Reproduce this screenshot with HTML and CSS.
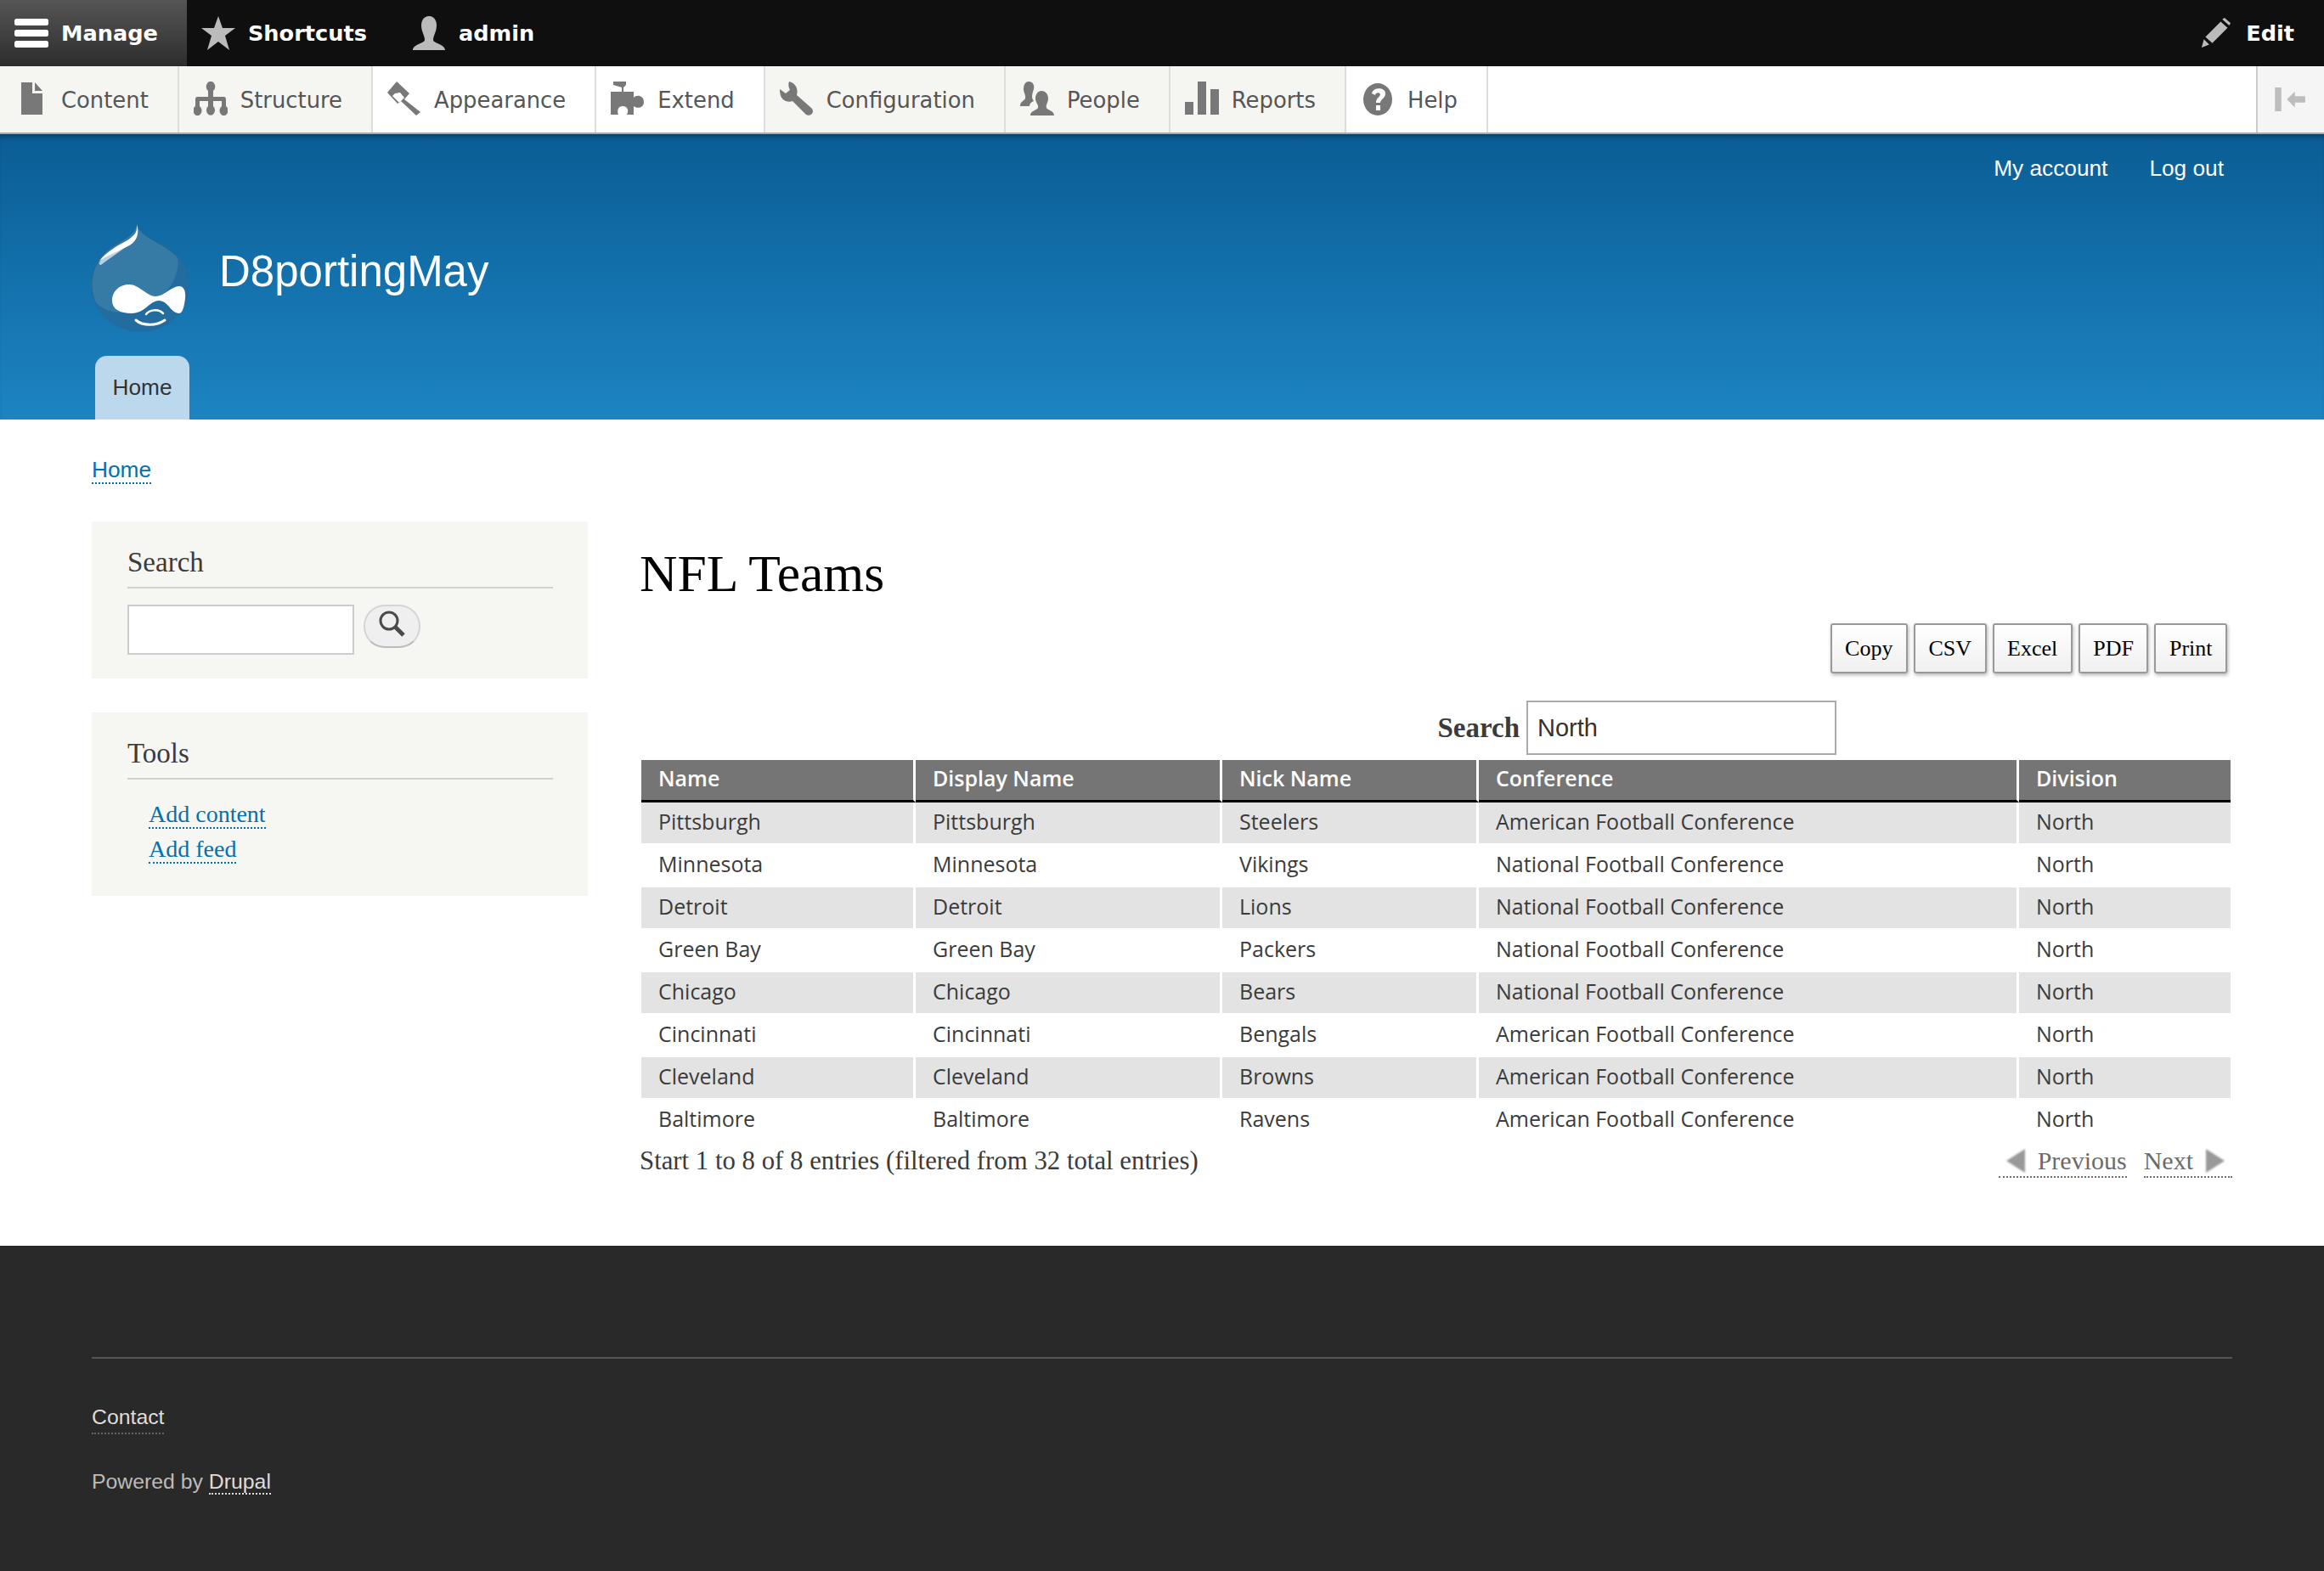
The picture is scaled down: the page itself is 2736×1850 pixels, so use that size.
FILE: index.html
```html
<!DOCTYPE html>
<html lang="en">
<head>
  <meta charset="UTF-8" />
  <title>NFL Teams | D8portingMay</title>
  <link rel="stylesheet" href="styles.css">
</head>
<body>
  <!-- Admin toolbar -->
  <div class="tray">
    <a class="tray-item active">
      <svg class="icon" viewBox="0 0 40 40"><g fill="#fff"><rect x="0" y="3" width="40" height="8" rx="2.5"/><rect x="0" y="16" width="40" height="8" rx="2.5"/><rect x="0" y="29" width="40" height="8" rx="2.5"/></g></svg>
      Manage
    </a>
    <a class="tray-item">
      <svg class="icon" viewBox="0 0 40 40"><path fill="#bbb" d="M20 0l5 14 15 0-12 9 5 17-13-10-13 10 5-17-12-9 15 0z"/></svg>
      Shortcuts
    </a>
    <a class="tray-item">
      <svg class="icon" viewBox="0 0 40 40"><path fill="#bbb" d="M20 0c6 0 9 5 9 11 0 7-4 12-4 17 0 4 14 5 14 12h-38c0-7 14-8 14-12 0-5-4-10-4-17 0-6 3-11 9-11z"/></svg>
      admin
    </a>
    <a class="tray-item edit">
      <svg class="icon" viewBox="0 0 40 40"><path fill="#bbb" d="M28 2l3-2 8 7-2 3zM26 5l9 8-20 20-9-8zM4 28l7 7-10 4z"/></svg>
      Edit
    </a>
  </div>

  <div class="nav">
    <a class="nav-item trail">
      <svg class="icon" viewBox="0 0 40 40"><path fill="#787878" d="M8 1h13v13h12v25h-25zM24 1l9 10h-9z"/></svg>
      Content
    </a>
    <a class="nav-item trail">
      <svg class="icon" viewBox="0 0 40 40"><path fill="#787878" d="M20 0a5 6 0 0 1 3 11v7h12c3 0 3 2 3 4v7a5 6 0 1 1-5 0v-6h-10v6a5 6 0 1 1-6 0v-6h-10v6a5 6 0 1 1-5 0v-7c0-2 0-4 3-4h12v-7a5 6 0 0 1 3-11z"/></svg>
      Structure
    </a>
    <a class="nav-item">
      <svg class="icon" viewBox="0 0 40 40"><path fill="#787878" fill-rule="evenodd" d="M11 0l15 14-6 7 19 15-5 4-18-17-4 3-12-13zM9 14l-3 3 8 8 6-6-5-6z"/></svg>
      Appearance
    </a>
    <a class="nav-item">
      <svg class="icon" viewBox="0 0 40 40"><path fill="#787878" d="M3 0h15v4l-3 3v5h12v7c3-4 12-3 12 5s-9 8-12 5v10h-8c3-6 0-10-5-10s-7 5-5 10h-9v-27h13v-5l-10-3z"/></svg>
      Extend
    </a>
    <a class="nav-item trail">
      <svg class="icon" viewBox="0 0 40 40"><path fill="#787878" d="M11 0c-1 3-1 6 1 10l-5 4c-3-2-5-4-7-5 0 7 2 12 7 14 3 1 6 1 8 0l16 16c3 2 8 0 8-4 0-2-1-3-2-4l-17-15c2-7-1-14-9-16z"/></svg>
      Configuration
    </a>
    <a class="nav-item trail">
      <svg class="icon" viewBox="0 0 40 40"><path fill="#787878" d="M10 0c5 0 7 4 6 9-1 3-2 6-2 9 0 3 2 4 2 5-3 1-5 3-5 6h-11c0-6 5-6 6-9 1-4-2-7-2-11 0-5 2-9 6-9zM25 11c5 0 8 4 8 9 0 5-3 7-2 11 1 3 9 3 9 9h-28c0-6 8-6 9-9 1-4-3-6-3-11 0-5 3-9 7-9z"/></svg>
      People
    </a>
    <a class="nav-item trail">
      <svg class="icon" viewBox="0 0 40 40"><path fill="#787878" d="M0 24h10v15h-10zM15 0h10v39h-10zM30 9h10v30h-10z"/></svg>
      Reports
    </a>
    <a class="nav-item">
      <svg class="icon" viewBox="0 0 40 40"><path fill="#787878" fill-rule="evenodd" d="M20 2a17 19 0 1 1 0 38a17 19 0 1 1 0-38zM13 14l4 2c0-3 5-4 6-1 0 3-5 4-5 10h5c0-4 6-5 6-11 0-7-14-8-16 0zM18 28v6h5v-6z"/></svg>
      Help
    </a>
    <div class="nav-toggle">
      <svg class="toggle-icon" viewBox="0 0 40 32"><path fill="#bdbdbd" d="M0 1h8v30h-8zM15 16l10-10v6h13v8h-13v6z"/></svg>
    </div>
  </div>

  <!-- Site header -->
  <header class="header">
    <div class="secondary">
      <a>My account</a>
      <a>Log out</a>
    </div>
    <div class="branding">
      <svg class="logo" viewBox="0 0 114 128">
        <path fill="#357ba6" stroke="#2d5f80" stroke-width="0.8" d="M53 1C55 13 70 19 88 30C105 41 114 58 114 73C114 105 88 128 58 128C26 128 0 105 0 73C0 50 14 34 30 25C42 18 52 12 53 1Z"/>
        <path fill="#236c9f" d="M101 38C108 47 114 60 114 73C114 105 88 128 58 128C32 128 10 113 3 92C14 105 28 108 48 104C78 98 106 72 101 38Z"/>
        <path fill="#b9d0e0" d="M52 12C53 18 50 22 44 26C32 35 20 43 11 50C8 50 8 47 11 44C20 34 40 26 52 12Z"/>
        <path fill="#fff" d="M53 2C54 12 50 16 42 21C30 27 16 36 9 45C20 38 36 32 46 26C54 20 56 12 53 2Z"/>
        <path fill="#fff" d="M24 92C24 80 34 73 44 73C56 73 65 87 75 87C85 87 94 75 103 75C109 75 111 82 110 90C109 98 107 107 103 107C93 107 90 92 79 92C68 92 63 107 47 107C33 107 24 102 24 92Z"/>
        <path fill="none" stroke="#fff" stroke-width="3" stroke-linecap="round" d="M52 115C60 122 76 122 86 115"/>
        <path fill="none" stroke="#fff" stroke-width="2.5" stroke-linecap="round" d="M64 108C68 103 78 101 84 107"/>
      </svg>
      <div class="site-name">D8portingMay</div>
    </div>
    <div class="tabs">
      <a class="tab">Home</a>
    </div>
  </header>

  <div class="page">
    <div class="breadcrumb"><a class="link">Home</a></div>
    <div class="columns">
      <aside class="sidebar">
        <section class="block">
          <h2 class="block-title">Search</h2>
          <form class="search-form">
            <input class="search-input" type="text" />
            <button class="search-btn" type="button">
              <svg class="search-icon" viewBox="0 0 32 32"><circle cx="12" cy="12" r="10" fill="none" stroke="#4a4a4a" stroke-width="3"/><path d="M19 19l10 10" stroke="#4a4a4a" stroke-width="5"/></svg>
            </button>
          </form>
        </section>
        <section class="block">
          <h2 class="block-title">Tools</h2>
          <ul class="tool-list">
            <li><a class="link">Add content</a></li>
            <li><a class="link">Add feed</a></li>
          </ul>
        </section>
      </aside>

      <main class="main">
        <h1 class="page-title">NFL Teams</h1>
        <div class="export">
          <button class="export-btn">Copy</button>
          <button class="export-btn">CSV</button>
          <button class="export-btn">Excel</button>
          <button class="export-btn">PDF</button>
          <button class="export-btn">Print</button>
        </div>
        <div class="table-filter">
          <label class="filter-label">Search</label>
          <input class="filter-input" type="text" value="North" />
        </div>
        <table class="teams">
          <thead>
            <tr><th class="col-name">Name</th><th class="col-display">Display Name</th><th class="col-nick">Nick Name</th><th class="col-conf">Conference</th><th class="col-div">Division</th></tr>
          </thead>
          <tbody>
            <tr><td>Pittsburgh</td><td>Pittsburgh</td><td>Steelers</td><td>American Football Conference</td><td>North</td></tr>
            <tr><td>Minnesota</td><td>Minnesota</td><td>Vikings</td><td>National Football Conference</td><td>North</td></tr>
            <tr><td>Detroit</td><td>Detroit</td><td>Lions</td><td>National Football Conference</td><td>North</td></tr>
            <tr><td>Green Bay</td><td>Green Bay</td><td>Packers</td><td>National Football Conference</td><td>North</td></tr>
            <tr><td>Chicago</td><td>Chicago</td><td>Bears</td><td>National Football Conference</td><td>North</td></tr>
            <tr><td>Cincinnati</td><td>Cincinnati</td><td>Bengals</td><td>American Football Conference</td><td>North</td></tr>
            <tr><td>Cleveland</td><td>Cleveland</td><td>Browns</td><td>American Football Conference</td><td>North</td></tr>
            <tr><td>Baltimore</td><td>Baltimore</td><td>Ravens</td><td>American Football Conference</td><td>North</td></tr>
          </tbody>
        </table>
        <div class="table-foot">
          <div class="info">Start 1 to 8 of 8 entries (filtered from 32 total entries)</div>
          <div class="pager">
            <a class="pager-link">
              <svg class="arrow" viewBox="0 0 24 28"><path fill="#999" d="M23 0v28l-22-14z"/></svg>
              Previous
            </a>
            <a class="pager-link">
              Next
              <svg class="arrow" viewBox="0 0 24 28"><path fill="#999" d="M1 0v28l22-14z"/></svg>
            </a>
          </div>
        </div>
      </main>
    </div>
  </div>

  <footer class="footer">
    <div class="footer-menu"><a class="footer-link">Contact</a></div>
    <div class="powered">Powered by <a class="footer-drupal">Drupal</a></div>
  </footer>
</body>
</html>
```

FILE: styles.css
```css
/* Base */
body {
  margin: 0;
  background: #fff;
  color: #3b3b3b;
  font-family: "Liberation Serif", serif;
  font-size: 28px;
}
a {
  text-decoration: none;
}

/* Toolbar */
.tray, .nav {
  display: flex;
  font-family: "DejaVu Sans", sans-serif;
}
.tray {
  height: 78px;
  background: #0f0f0f;
  color: #fff;
  font-size: 25.6px;
  font-weight: bold;
}
.tray-item, .nav-item {
  display: flex;
  align-items: center;
  gap: 15px;
  padding: 0 36px 0 17px;
}
.tray-item.active {
  padding-right: 34px;
  background: linear-gradient(to bottom, #555, #2d2d2d);
}
.tray-item.edit {
  margin-left: auto;
  gap: 17px;
  padding-right: 35px;
}
.icon {
  width: 40px;
  height: 40px;
  flex-shrink: 0;
}
.edit .icon {
  width: 36px;
  height: 36px;
}
.nav {
  height: 78px;
  background: #fff;
  color: #565656;
  font-size: 25.85px;
  border-bottom: 2px solid #aaa;
  position: relative;
}
.nav-item {
  border-right: 2px solid #ddd;
  padding-top: 1px;
  padding-right: 34px;
}
.nav .icon {
  margin-top: -3px;
}
.nav-item.trail {
  background: #f5f5f2;
}
.nav-toggle {
  margin-left: auto;
  width: 78px;
  border-left: 2px solid #ccc;
  background: #f5f5f5;
  display: flex;
  align-items: center;
  justify-content: center;
}
.toggle-icon {
  width: 38px;
  height: 30px;
}

/* Header */
.header {
  height: 336px;
  padding: 0 108px;
  background: linear-gradient(to bottom, #0a5d94, #1d84c3);
  box-shadow: inset 0 6px 6px -4px rgba(0, 0, 0, 0.4);
  color: #fff;
  font-family: "Liberation Sans", sans-serif;
  display: flex;
  flex-direction: column;
}
.secondary {
  display: flex;
  justify-content: flex-end;
  gap: 49px;
  padding: 25px 10px 0 0;
  font-size: 26.25px;
  line-height: 30px;
}
.branding {
  display: flex;
  align-items: flex-start;
  gap: 36px;
  margin-top: 49px;
}
.logo {
  width: 114px;
  height: 128px;
}
.site-name {
  font-size: 51px;
  line-height: 60px;
  margin-top: 28px;
}
.tabs {
  margin-top: auto;
  display: flex;
  padding-left: 4px;
}
.tab {
  width: 111px;
  height: 75px;
  background: #bcd8ec;
  color: #333;
  border-radius: 14px 14px 0 0;
  font-size: 26.25px;
  line-height: 74px;
  text-align: center;
}

/* Page */
.page {
  padding: 0 108px;
}
.breadcrumb {
  padding-top: 44px;
  height: 76px;
  font-family: "Liberation Sans", sans-serif;
  font-size: 26.25px;
  line-height: 30px;
}
.link {
  color: #0071b3;
  border-bottom: 2px dotted #0071b3;
}
.columns {
  display: flex;
  gap: 61px;
}
.sidebar {
  width: 584px;
  flex-shrink: 0;
}
.block {
  background: #f6f6f2;
  padding: 30px 41px 0 42px;
  margin-bottom: 40px;
}
.block-title {
  margin: 0 0 19px;
  padding-bottom: 11px;
  border-bottom: 2px solid #d0d0d0;
  font-size: 33px;
  line-height: 36px;
  font-weight: normal;
}
.search-form {
  display: flex;
  gap: 11px;
  height: 87px;
  align-items: flex-start;
}
.search-input {
  width: 267px;
  height: 59px;
  box-sizing: border-box;
  border: 2px solid #ccc;
  background: #fff;
}
.search-btn {
  width: 67px;
  height: 51px;
  padding: 0;
  border: 2px solid #d5d5d5;
  border-bottom-color: #bbb;
  border-radius: 25px;
  background: #efefef;
}
.search-icon {
  width: 32px;
  height: 32px;
  display: block;
  margin: 0 auto 6px;
}
.tool-list {
  list-style: none;
  margin: 0;
  padding: 2px 0 35px 25px;
  font-size: 28px;
  line-height: 40.5px;
}
.main {
  flex: 1;
}
.page-title {
  margin: 0;
  padding-top: 29px;
  color: #000;
  font-size: 61.6px;
  font-weight: normal;
  line-height: 64px;
}
.export {
  display: flex;
  justify-content: flex-end;
  gap: 7px;
  margin-top: 27px;
  padding-right: 6px;
}
.export-btn {
  height: 59px;
  padding: 0 15.5px;
  border: 2px solid #999;
  border-radius: 3px;
  background: linear-gradient(to bottom, #fff, #f0f0f0);
  box-shadow: 1px 2px 4px rgba(0, 0, 0, 0.3);
  color: #000;
  font-family: "Liberation Serif", serif;
  font-size: 26px;
}
.table-filter {
  display: flex;
  justify-content: flex-end;
  align-items: center;
  gap: 8px;
  margin-top: 32px;
  padding-right: 466px;
}
.filter-label {
  font-weight: bold;
  font-size: 33px;
}
.filter-input {
  width: 365px;
  height: 64px;
  box-sizing: border-box;
  padding: 0 11px;
  border: 2px solid #aaa;
  color: #333;
  font-family: "Liberation Sans", sans-serif;
  font-size: 29px;
}

/* Table */
.teams {
  margin: 6px 0 0 2px;
  width: 1871px;
  table-layout: fixed;
  border-collapse: separate;
  border-spacing: 0;
  font-family: "Open Sans", sans-serif;
  font-size: 25px;
}
.teams th {
  height: 50px;
  padding: 0 20px 5px;
  background: #757575;
  color: #fff;
  border-right: 3px solid #fff;
  border-bottom: 3px solid #000;
  text-align: left;
  font-weight: 600;
  box-sizing: border-box;
}
.teams td {
  height: 50px;
  padding: 0 20px 5px;
  border-right: 3px solid #fff;
  border-bottom: 2px solid #fff;
  box-sizing: border-box;
}
.teams th:last-child, .teams td:last-child {
  border-right: 0;
}
.teams tbody tr:nth-child(odd) td {
  background: #e3e3e3;
}
.col-name { width: 323px; }
.col-display { width: 361px; }
.col-nick { width: 302px; }
.col-conf { width: 636px; }
.col-div { width: 249px; }
.table-foot {
  display: flex;
  justify-content: space-between;
  align-items: flex-start;
  height: 118px;
  padding-top: 4px;
}
.info {
  font-size: 30.8px;
  line-height: 36px;
}
.pager {
  display: flex;
  gap: 20px;
  font-size: 30px;
  line-height: 36px;
  color: #6b6b6b;
}
.pager-link {
  display: flex;
  align-items: center;
  gap: 14px;
  border-bottom: 2px dotted #6b6b6b;
  padding: 0 8px;
}
.pager-link:last-child {
  padding-left: 0;
}
.pager-link:first-child {
  padding-right: 0;
}
.arrow {
  width: 24px;
  height: 28px;
  filter: blur(1.2px);
}

/* Footer */
.footer {
  height: 383px;
  box-sizing: border-box;
  background: #292929;
  padding: 131px 108px 0;
  font-family: "Liberation Sans", sans-serif;
  font-size: 24.8px;
  line-height: 28px;
  color: #bbb;
}
.footer-menu {
  border-top: 2px solid #555;
  padding-top: 55px;
  height: 57px;
}
.footer-link {
  color: #ddd;
  border-bottom: 2px dotted #666;
  padding-bottom: 5px;
}
.powered {
  margin-top: 19px;
}
.footer-drupal {
  color: #ddd;
  border-bottom: 2px dotted #ddd;
}
```
